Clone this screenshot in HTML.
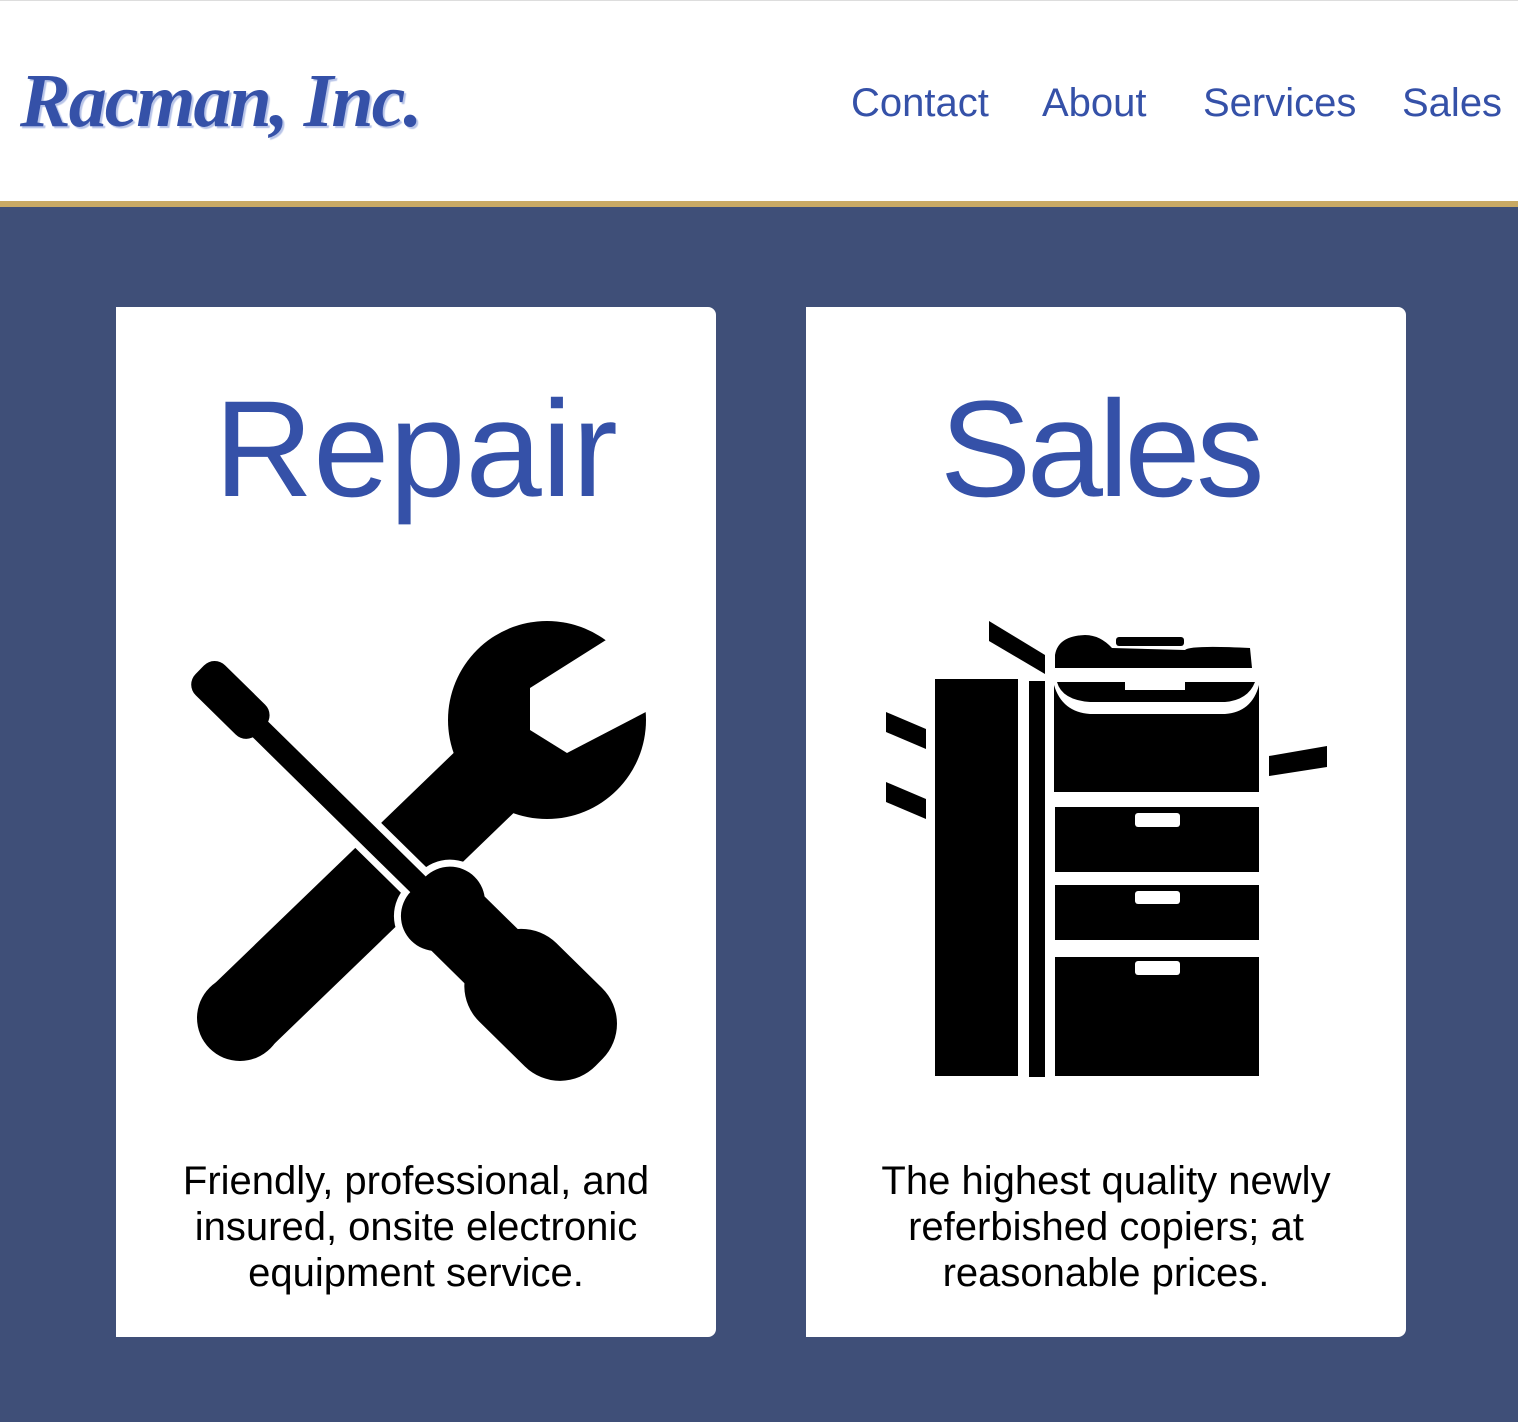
<!DOCTYPE html>
<html><head><meta charset="utf-8"><style>
*{margin:0;padding:0;box-sizing:border-box}
body{width:1518px;height:1422px;background:#3f4f78;position:relative;overflow:hidden;font-family:"Liberation Sans",sans-serif}
.hdr{position:absolute;left:0;top:0;width:1518px;height:201px;background:#fff;border-top:1px solid #ddd}
.gold{position:absolute;left:0;top:201px;width:1518px;height:6px;background:#c8a964}
.logo{position:absolute;left:20px;top:58px;font-family:"Liberation Serif",serif;font-weight:bold;font-style:italic;font-size:76px;letter-spacing:-2px;color:#3551a8;text-shadow:2px 2px 1px #b8c4e8;white-space:nowrap}
.nav{position:absolute;top:81px;font-size:40px;color:#3551a8;white-space:nowrap}
.card{position:absolute;top:307px;width:600px;height:1030px;background:#fff;border-radius:0 8px 8px 0}
.t{position:absolute;left:0;width:600px;text-align:center;font-size:137px;color:#3551a8;line-height:160px;top:370px}
.p{position:absolute;left:0;width:600px;top:1158px;text-align:center;font-size:40px;line-height:46px;color:#000}
</style></head><body>
<div class="hdr"></div><div class="gold"></div>
<div class="logo">Racman, Inc.</div>
<div class="nav" style="left:851px">Contact</div>
<div class="nav" style="left:1042px">About</div>
<div class="nav" style="left:1203px">Services</div>
<div class="nav" style="left:1402px">Sales</div>
<div class="card" style="left:116px"></div>
<div class="card" style="left:806px"></div>
<div class="t" style="left:116px">Repair</div>
<div class="t" style="left:800px;letter-spacing:-4.5px">Sales</div>
<div class="p" style="left:116px">Friendly, professional, and<br>insured, onsite electronic<br>equipment service.</div>
<div class="p" style="left:806px">The highest quality newly<br>referbished copiers; at<br>reasonable prices.</div>
<svg width="1518" height="1422" style="position:absolute;left:0;top:0">
<defs><mask id="jm"><rect width="1518" height="1422" fill="#fff"/><polygon points="625,628 530,688 530,730 567,753 665,702" fill="#000"/></mask></defs>
<g mask="url(#jm)">
<circle cx="547" cy="720" r="99"/>
</g>
<polygon points="525,802 465,742 210,988 270,1048"/>
<circle cx="240" cy="1018" r="43"/>
<g transform="translate(204,674) rotate(44.5)" stroke="#fff" stroke-width="14">
<rect x="-6" y="-21" width="86" height="42" rx="15"/>
<rect x="60" y="-11" width="260" height="22"/>
<rect x="300" y="-45" width="70" height="90" rx="35"/>
<rect x="355" y="-38" width="50" height="76"/>
<rect x="390" y="-55" width="164" height="110" rx="50"/>
</g>
<g transform="translate(204,674) rotate(44.5)" fill="#000">
<rect x="-6" y="-21" width="86" height="42" rx="15"/>
<rect x="60" y="-11" width="260" height="22"/>
<rect x="300" y="-45" width="70" height="90" rx="35"/>
<rect x="355" y="-38" width="50" height="76"/>
<rect x="390" y="-55" width="164" height="110" rx="50"/>
</g>
<g fill="#000">
<rect x="935" y="679" width="83" height="397"/>
<rect x="1029" y="681" width="16" height="396"/>
<path d="M1054 685 Q1062 712 1090 714 L1225 714 Q1252 712 1259 685 L1259 792 L1054 792 Z"/>
<path d="M1057 682 L1255 682 Q1248 700 1225 702 L1090 702 Q1062 700 1057 682 Z"/>
<rect x="1055" y="807" width="204" height="65"/>
<rect x="1055" y="885" width="204" height="55"/>
<rect x="1055" y="957" width="204" height="119"/>
<path d="M1055 668 L1055 655 Q1058 636 1085 635 Q1100 635 1112 648 L1185 650 Q1190 645 1250 648 L1252 668 Z"/>
<rect x="1116" y="637" width="68" height="9" rx="3"/>
<polygon points="886,712 926,729 926,749 886,732"/>
<polygon points="886,782 926,799 926,819 886,802"/>
<polygon points="989,621 1045,655 1045,674 989,641"/>
<polygon points="1269,756 1327,746 1327,767 1269,776"/>
</g>
<g fill="#fff">
<rect x="1135" y="813" width="45" height="14" rx="3"/>
<rect x="1135" y="891" width="45" height="13" rx="3"/>
<rect x="1135" y="961" width="45" height="14" rx="3"/>
<rect x="1125" y="682" width="60" height="8"/>
</g>
</svg>
</body></html>
